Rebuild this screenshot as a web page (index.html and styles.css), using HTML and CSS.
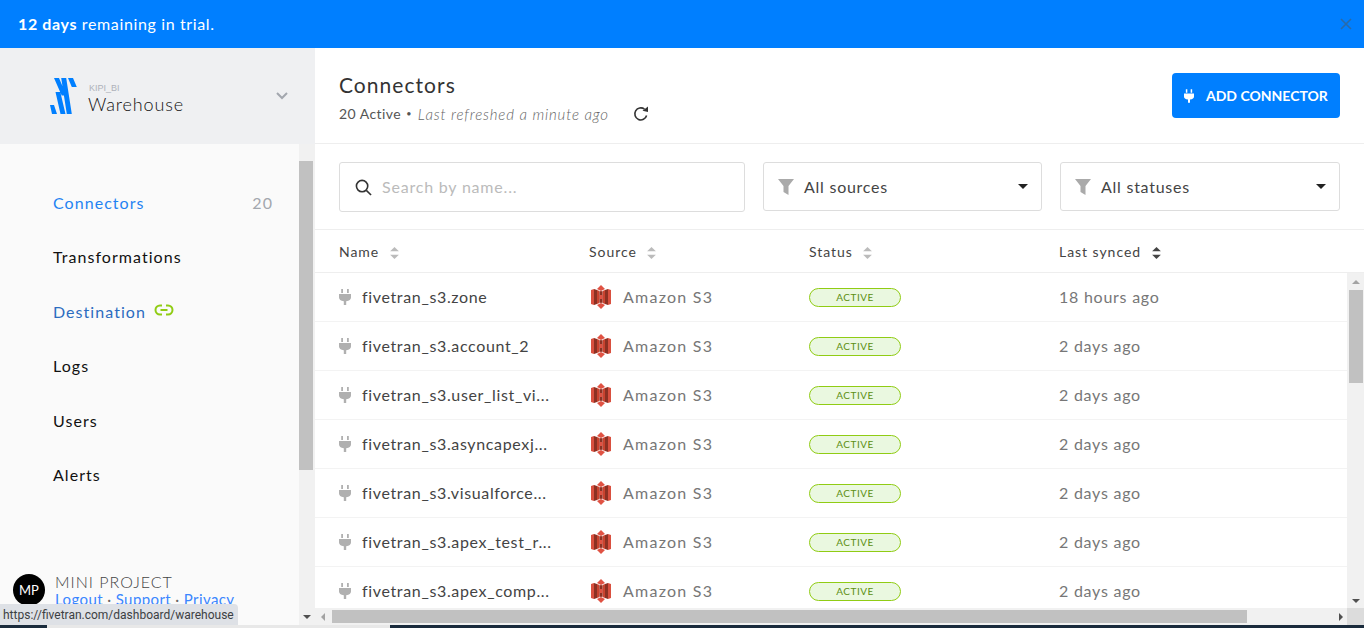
FILE: index.html
```html
<!DOCTYPE html>
<html lang="en">
<head>
    <meta charset="UTF-8">
    <meta name="viewport" content="width=device-width, initial-scale=1.0">
    <title>Connectors</title>
    <link rel="stylesheet" href="styles.css">
</head>
<body>
    <svg class="defs" width="0" height="0">
        <defs>
            <symbol id="plug" viewBox="0 0 12 16">
                <path d="M2.200 0h1.800v4H2.200zM8 0h1.800v4H8zM0 5h12v3.500c0 2-1.600 3.300-4.800 3.700V16H4.800v-3.800C1.600 11.800 0 10.500 0 8.500z"/>
            </symbol>
            <symbol id="s3" viewBox="0 0 20 24">
                <path fill="#d9503f" d="M0 5l3-1v16l-3-1zM20 5l-3-1v16l3-1z"/>
                <path fill="#8c3123" d="M3 4l3 1v14l-3 1zM17 4l-3 1v14l3 1z"/>
                <path fill="#c9432f" d="M6 5l2.500 1v12L6 19zM14 5l-2.500 1v12l2.500 1z"/>
                <path fill="#e05243" d="M6 4L10 0l4 4-4 2zM6 20l4 4 4-4-4-2z"/>
                <path fill="#8c3123" d="M8.500 6.500L10 6l1.500.5v11L10 18l-1.500-.5z"/>
                <path fill="#e05243" d="M8.500 10h3v4h-3z"/>
            </symbol>
            <symbol id="funnel" viewBox="0 0 16 16">
                <path d="M0 0h16l-5.500 7v9l-5-3V7z"/>
            </symbol>
            <symbol id="sort" viewBox="0 0 8 11">
                <path class="sort-up" d="M4 0l4 4H0z"/>
                <path class="sort-down" d="M4 11L0 7h8z"/>
            </symbol>
        </defs>
    </svg>

    <div class="trial-banner">
        <span><b>12 days</b> remaining in trial.</span>
        <svg class="trial-close" viewBox="0 0 12 12" width="12" height="12">
            <path d="M1 1l10 10M11 1L1 11"/>
        </svg>
    </div>

    <div class="app">
        <aside class="sidebar">
            <div class="group-head">
                <svg class="logo" viewBox="0 0 28 36" width="28" height="36">
                    <path d="M4 0h5l7.500 17.500h-4.800zM11.200 0h5L21.800 36h-5zM18 0h5l3.800 9h-5zM5.500 14h4.800L15.500 36h-5zM0 27h4L7 36H2z"/>
                </svg>
                <div class="group-name">
                    <small>KIPI_BI</small>
                    <span>Warehouse</span>
                </div>
                <svg class="chevron" viewBox="0 0 12 8" width="12" height="8">
                    <path d="M1 1l5 5 5-5" />
                </svg>
            </div>
            <div class="side-body">
                <div class="side-scroll">
                    <nav class="side-nav">
                        <a class="nav-item nav-active" href="#">Connectors <em>20</em></a>
                        <a class="nav-item" href="#">Transformations</a>
                        <a class="nav-item nav-dest" href="#">Destination
                            <svg viewBox="0 0 20 12" width="20" height="12">
                                <path d="M8 1.500H6a4.500 4.500 0 0 0 0 9h2M12 1.500h2a4.500 4.500 0 0 1 0 9h-2M6.500 6h7"/>
                            </svg>
                        </a>
                        <a class="nav-item" href="#">Logs</a>
                        <a class="nav-item" href="#">Users</a>
                        <a class="nav-item" href="#">Alerts</a>
                    </nav>
                    <div class="user-box">
                        <div class="avatar">MP</div>
                        <div class="user-text">
                            <div class="user-name">MINI PROJECT</div>
                            <div class="user-links"><a href="#">Logout</a> · <a href="#">Support</a> · <a href="#">Privacy</a></div>
                        </div>
                    </div>
                </div>
                <div class="vbar vbar-side">
                    <div class="vbar-thumb"></div>
                    <div class="arrow-down"></div>
                </div>
            </div>
        </aside>

        <main class="content">
            <header class="page-head">
                <div>
                    <h1>Connectors</h1>
                    <p class="page-sub">20 Active<span class="dot">•</span><i>Last refreshed a minute ago</i>
                        <svg class="refresh" viewBox="0 0 16 16" width="16" height="16">
                            <path d="M13.600 9.500A6 6 0 1 1 11.500 3.200"/>
                            <path class="refresh-tip" d="M9.500 4.800L15 6V0.500z"/>
                        </svg>
                    </p>
                </div>
                <a class="add-btn" href="#">
                    <svg width="10" height="14"><use href="#plug"/></svg>
                    ADD CONNECTOR
                </a>
            </header>

            <div class="filters">
                <label class="search">
                    <svg viewBox="0 0 18 18" width="17" height="17">
                        <circle cx="7.500" cy="7.500" r="6"/>
                        <path d="M12 12l5 5"/>
                    </svg>
                    <input type="text" placeholder="Search by name...">
                </label>
                <div class="select-box">
                    <svg class="funnel" width="16" height="16"><use href="#funnel"/></svg>
                    <span>All sources</span>
                    <b class="caret"></b>
                </div>
                <div class="select-box">
                    <svg class="funnel" width="16" height="16"><use href="#funnel"/></svg>
                    <span>All statuses</span>
                    <b class="caret"></b>
                </div>
            </div>

            <div class="table-head">
                <div>Name <svg class="sort" width="9" height="12"><use href="#sort"/></svg></div>
                <div>Source <svg class="sort" width="9" height="12"><use href="#sort"/></svg></div>
                <div>Status <svg class="sort" width="9" height="12"><use href="#sort"/></svg></div>
                <div>Last synced <svg class="sort sort-on" width="9" height="12"><use href="#sort"/></svg></div>
            </div>

            <div class="table-wrap">
                <div class="rows">
                    <div class="row">
                        <div class="cell-name"><svg class="plug" width="12" height="16"><use href="#plug"/></svg>fivetran_s3.zone</div>
                        <div class="cell-source"><svg width="20" height="24"><use href="#s3"/></svg><span>Amazon S3</span></div>
                        <div><span class="badge">ACTIVE</span></div>
                        <div class="cell-time">18 hours ago</div>
                    </div>
                    <div class="row">
                        <div class="cell-name"><svg class="plug" width="12" height="16"><use href="#plug"/></svg>fivetran_s3.account_2</div>
                        <div class="cell-source"><svg width="20" height="24"><use href="#s3"/></svg><span>Amazon S3</span></div>
                        <div><span class="badge">ACTIVE</span></div>
                        <div class="cell-time">2 days ago</div>
                    </div>
                    <div class="row">
                        <div class="cell-name"><svg class="plug" width="12" height="16"><use href="#plug"/></svg>fivetran_s3.user_list_vi...</div>
                        <div class="cell-source"><svg width="20" height="24"><use href="#s3"/></svg><span>Amazon S3</span></div>
                        <div><span class="badge">ACTIVE</span></div>
                        <div class="cell-time">2 days ago</div>
                    </div>
                    <div class="row">
                        <div class="cell-name"><svg class="plug" width="12" height="16"><use href="#plug"/></svg>fivetran_s3.asyncapexj...</div>
                        <div class="cell-source"><svg width="20" height="24"><use href="#s3"/></svg><span>Amazon S3</span></div>
                        <div><span class="badge">ACTIVE</span></div>
                        <div class="cell-time">2 days ago</div>
                    </div>
                    <div class="row">
                        <div class="cell-name"><svg class="plug" width="12" height="16"><use href="#plug"/></svg>fivetran_s3.visualforce...</div>
                        <div class="cell-source"><svg width="20" height="24"><use href="#s3"/></svg><span>Amazon S3</span></div>
                        <div><span class="badge">ACTIVE</span></div>
                        <div class="cell-time">2 days ago</div>
                    </div>
                    <div class="row">
                        <div class="cell-name"><svg class="plug" width="12" height="16"><use href="#plug"/></svg>fivetran_s3.apex_test_r...</div>
                        <div class="cell-source"><svg width="20" height="24"><use href="#s3"/></svg><span>Amazon S3</span></div>
                        <div><span class="badge">ACTIVE</span></div>
                        <div class="cell-time">2 days ago</div>
                    </div>
                    <div class="row">
                        <div class="cell-name"><svg class="plug" width="12" height="16"><use href="#plug"/></svg>fivetran_s3.apex_comp...</div>
                        <div class="cell-source"><svg width="20" height="24"><use href="#s3"/></svg><span>Amazon S3</span></div>
                        <div><span class="badge">ACTIVE</span></div>
                        <div class="cell-time">2 days ago</div>
                    </div>
                </div>
                <div class="vbar vbar-main">
                    <div class="vbar-arrow"></div>
                    <div class="vbar-thumb"></div>
                    <div class="arrow-down"></div>
                </div>
            </div>

            <div class="hbar">
                <div class="arrow-left"></div>
                <div class="hbar-track"><div class="hbar-thumb"></div></div>
                <div class="arrow-right"></div>
                <div class="hbar-corner"></div>
            </div>
        </main>
    </div>

    <div class="taskbar-edge"><div></div></div>
    <div class="link-tooltip">https://fivetran.com/dashboard/warehouse</div>
</body>
</html>
```

FILE: styles.css
```css
* {
    box-sizing: border-box;
}

html, body {
    height: 628px;
    overflow: hidden;
}

body {
    margin: 0;
    position: relative;
    display: flex;
    flex-direction: column;
    font-family: "Lato", "Open Sans", sans-serif;
    font-size: 16px;
    color: #333;
    background-color: #fff;
}

a {
    text-decoration: none;
}

.defs {
    position: absolute;
}

/* trial banner */
.trial-banner {
    flex: 0 0 48px;
    display: flex;
    align-items: center;
    justify-content: space-between;
    padding: 0 12px 2px 18px;
    background-color: #007fff;
    color: #fff;
    font-size: 16px;
    letter-spacing: 0.63px;
}

.trial-close {
    fill: none;
    stroke: #2a6aa8;
    stroke-width: 1.600;
    margin-top: 2px;
}

.app {
    flex: 1;
    display: flex;
    min-height: 0;
}

/* sidebar */
.sidebar {
    flex: 0 0 315px;
    display: flex;
    flex-direction: column;
    background-color: #fafafa;
}

.group-head {
    flex: 0 0 96px;
    display: flex;
    align-items: center;
    padding: 0 27px 0 50px;
    background-color: #eff0f2;
}

.logo {
    fill: #007fff;
    margin-right: 10px;
}

.group-name {
    flex: 1;
    display: flex;
    flex-direction: column;
    padding-top: 5px;
}

.group-name small {
    font-family: "Liberation Sans", sans-serif;
    font-size: 9px;
    line-height: 10px;
    color: #aeb2ba;
    padding-left: 1px;
}

.group-name span {
    font-size: 18px;
    font-weight: 300;
    line-height: 22px;
    color: #111;
    letter-spacing: 0.85px;
}

.chevron {
    fill: none;
    stroke: #a3a7ae;
    stroke-width: 2;
}

.side-body {
    flex: 1;
    display: flex;
    min-height: 0;
}

.side-scroll {
    flex: 1;
    display: flex;
    flex-direction: column;
}

.side-nav {
    padding: 31.400px 26px 0 53px;
}

.nav-item {
    display: flex;
    align-items: center;
    height: 54.400px;
    color: #111;
    letter-spacing: 1.05px;
}

.nav-item em {
    margin-left: auto;
    font-style: normal;
    color: #a3a7ae;
}

.nav-active {
    color: #1f83f2;
}

.nav-dest {
    color: #2c6cc0;
}

.nav-dest svg {
    margin-left: 8px;
    margin-bottom: 2px;
    fill: none;
    stroke: #90cc14;
    stroke-width: 2;
}

.user-box {
    margin-top: auto;
    display: flex;
    gap: 10px;
    padding: 0 0 18px 13px;
}

.avatar {
    width: 32px;
    height: 32px;
    border-radius: 50%;
    background-color: #000;
    color: #fff;
    font-size: 13px;
    line-height: 32px;
    text-align: center;
}

.user-text {
    margin-top: -1px;
}

.user-name {
    font-size: 16px;
    font-weight: 300;
    line-height: 18px;
    color: #444;
    letter-spacing: 1px;
}

.user-links {
    font-size: 15px;
    line-height: 16px;
    color: #666;
    letter-spacing: 0.4px;
}

.user-links a {
    color: #3a86ff;
}

/* scrollbars */
.vbar {
    flex: 0 0 16px;
    display: flex;
    flex-direction: column;
    align-items: center;
}

.vbar-side {
    background-color: #f1f1f1;
    align-items: flex-start;
    padding-top: 17px;
}

.vbar-side .vbar-thumb {
    width: 14px;
    height: 309px;
    background-color: #c1c1c1;
}

.vbar-side .arrow-down {
    margin-left: 4px;
    margin-bottom: 6px;
}

.vbar-main {
    flex: 0 0 17px;
    background-color: #f1f1f1;
}

.vbar-arrow {
    width: 0;
    height: 0;
    margin: 7px 0 6px;
    border-left: 4px solid transparent;
    border-right: 4px solid transparent;
    border-bottom: 4px solid #a3a3a3;
}

.vbar-main .vbar-thumb {
    width: 14px;
    height: 93px;
    background-color: #c1c1c1;
}

.arrow-down {
    margin-top: auto;
    margin-bottom: 5px;
    width: 0;
    height: 0;
    border-left: 4px solid transparent;
    border-right: 4px solid transparent;
    border-top: 4px solid #505050;
}

.hbar {
    flex: 0 0 17px;
    display: flex;
    align-items: center;
    background-color: #f1f1f1;
}

.arrow-left {
    margin: 0 7px 0 6px;
    width: 0;
    height: 0;
    border-top: 4px solid transparent;
    border-bottom: 4px solid transparent;
    border-right: 4px solid #a3a3a3;
}

.hbar-track {
    width: 1003px;
    height: 13px;
}

.hbar-thumb {
    width: 915px;
    height: 13px;
    background-color: #c1c1c1;
}

.arrow-right {
    margin: 0 4px;
    width: 0;
    height: 0;
    border-top: 4px solid transparent;
    border-bottom: 4px solid transparent;
    border-left: 4px solid #505050;
}

.hbar-corner {
    width: 17px;
    height: 17px;
    margin-left: auto;
    background-color: #dcdcdc;
}

/* main */
.content {
    flex: 1;
    min-width: 0;
    display: flex;
    flex-direction: column;
}

.page-head {
    flex: 0 0 96px;
    display: flex;
    align-items: flex-start;
    justify-content: space-between;
    padding: 25px 24px 0;
    border-bottom: 1px solid #eee;
}

h1 {
    margin: -1px 0 0;
    font-size: 21px;
    font-weight: 400;
    line-height: 26px;
    color: #333;
    letter-spacing: 1.05px;
}

.page-sub {
    display: flex;
    align-items: center;
    margin: 6px 0 0;
    font-size: 14px;
    line-height: 20px;
    color: #555;
    letter-spacing: 0.45px;
}

.page-sub .dot {
    font-size: 9px;
    margin: 0 6px 0 5px;
}

.page-sub i {
    font-size: 15px;
    font-weight: 300;
    color: #666;
    letter-spacing: 0.85px;
}

.refresh {
    margin-left: 24px;
    fill: none;
    stroke: #333;
    stroke-width: 1.600;
}

.refresh-tip {
    fill: #333;
    stroke: none;
}

.add-btn {
    display: flex;
    align-items: center;
    gap: 12px;
    width: 168px;
    height: 45px;
    padding-left: 12px;
    background-color: #007fff;
    border-radius: 4px;
    color: #fff;
    font-size: 14px;
    font-weight: 700;
}

.add-btn svg {
    fill: #fff;
}

.filters {
    flex: 0 0 86px;
    display: grid;
    grid-template-columns: 406px 279px 280px;
    gap: 18px;
    align-items: start;
    padding: 18px 24px 0;
    border-bottom: 1px solid #eee;
}

.search {
    display: flex;
    align-items: center;
    gap: 10px;
    height: 50px;
    padding: 0 15px;
    border: 1px solid #ddd;
    border-radius: 3px;
}

.search svg {
    flex: none;
    fill: none;
    stroke: #333;
    stroke-width: 1.700;
}

.search input {
    flex: 1;
    min-width: 0;
    border: none;
    outline: none;
    padding: 0 0 2px;
    font-family: inherit;
    font-size: 16px;
    letter-spacing: 0.8px;
}

.search input::placeholder {
    color: #bbb;
}

.select-box {
    display: flex;
    align-items: center;
    gap: 10px;
    height: 49px;
    padding: 0 13px 0 14px;
    border: 1px solid #ddd;
    border-radius: 3px;
    color: #444;
    letter-spacing: 0.75px;
}

.funnel {
    fill: #aaa;
}

.caret {
    margin-left: auto;
    width: 0;
    height: 0;
    border-left: 5px solid transparent;
    border-right: 5px solid transparent;
    border-top: 5px solid #222;
}

.table-head {
    flex: 0 0 43px;
    display: grid;
    grid-template-columns: 250px 220px 250px 1fr;
    align-items: center;
    padding-left: 24px;
    border-bottom: 1px solid #eee;
    font-size: 14px;
    color: #444;
    letter-spacing: 0.95px;
}

.sort {
    margin-left: 6px;
    vertical-align: -2px;
    fill: #bbb;
}

.sort-on {
    fill: #444;
}

.table-wrap {
    flex: 1;
    display: flex;
    min-height: 0;
}

.rows {
    flex: 1;
    min-width: 0;
    overflow: hidden;
}

.row {
    display: grid;
    grid-template-columns: 250px 220px 250px 1fr;
    align-items: center;
    height: 49px;
    padding-left: 24px;
    border-bottom: 1px solid #f3f3f3;
    letter-spacing: 0.75px;
}

.cell-name {
    display: flex;
    align-items: center;
    gap: 11px;
    padding-bottom: 2px;
    color: #444;
    letter-spacing: 0.65px;
}

.plug {
    fill: #b0b0b0;
    margin-top: 2px;
}

.cell-source {
    display: flex;
    align-items: center;
    gap: 12px;
    padding-left: 2px;
    color: #777;
}

.cell-source span {
    padding-bottom: 2px;
    letter-spacing: 1.25px;
}

.cell-time {
    padding-bottom: 2px;
    color: #777;
}

.badge {
    display: block;
    width: 92px;
    height: 19px;
    border: 1px solid #90cc14;
    border-radius: 10px;
    background-color: #eaf8e0;
    color: #5c8f10;
    font-size: 10px;
    line-height: 17px;
    letter-spacing: 0.5px;
    text-align: center;
}

/* bottom edge of the window and the browser's link preview */
.taskbar-edge {
    flex: 0 0 3px;
    background-color: #1a2b3c;
}

.taskbar-edge div {
    width: 343px;
    height: 3px;
    margin-left: 47px;
    background-color: #e8e8e8;
}

.link-tooltip {
    position: absolute;
    left: 0;
    bottom: 3px;
    width: 238px;
    height: 21px;
    padding-left: 3px;
    background-color: #dee1e6;
    border-top-right-radius: 4px;
    font-family: "Roboto", sans-serif;
    font-size: 12px;
    line-height: 22px;
    color: #3c4043;
    white-space: nowrap;
}
```
